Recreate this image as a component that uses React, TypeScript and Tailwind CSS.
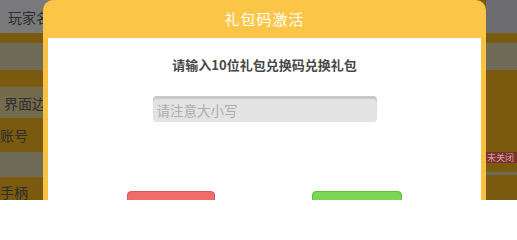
import React from "react";

const font = { fontFamily: '"Noto Sans CJK SC", "Noto Sans", sans-serif' };

const leftBands = [
  { h: "h-[33px]", bg: "bg-[#79797b]", text: "玩家名", cls: "pl-[8px] text-[14px] text-[#2e2e2e]" },
  { h: "h-[10px]", bg: "bg-[#7a5a0e]" },
  { h: "h-[27px]", bg: "bg-[#6f6b57]" },
  { h: "h-[17px]", bg: "bg-[#7a5a0e]" },
  { h: "h-[31px]", bg: "bg-[#746a4c]", text: "界面边距", cls: "pl-[4px] text-[14px] text-[#2e2e2e]" },
  { h: "h-[34px]", bg: "bg-[#7a5a0e]", text: "账号", cls: "pl-0 text-[14px] text-[#2e2e2e]" },
  { h: "h-[25px]", bg: "bg-[#6f6b57]" },
  { h: "h-[23px]", bg: "bg-[#7a5a0e]", text: "手柄", cls: "pl-0 pt-[6px] text-[14px] text-[#2e2e2e]" },
];

const rightBands = [
  { h: "h-[33px]", bg: "bg-[#6c6c70]" },
  { h: "h-[10px]", bg: "bg-[#7a5a0e]" },
  { h: "h-[27px]", bg: "bg-[#6f6b57]" },
  { h: "h-[82px]", bg: "bg-[#7a5a0e]" },
  { h: "h-[11px]", bg: "bg-[#7e3030]", text: "未关闭", cls: "pl-[1px] text-[9px] text-[#c9a9a0]" },
  { h: "h-[9px]", bg: "bg-[#7a5a0e]" },
  { h: "h-[3px]", bg: "bg-[#6f6b57]" },
  { h: "h-[25px]", bg: "bg-[#7a5a0e]" },
];

type Band = { h: string; bg: string; text?: string; cls?: string };

const Column: React.FC<{ bands: Band[]; className: string }> = ({ bands, className }) => (
  <div className={`flex flex-col ${className}`}>
    {bands.map((b, i) => (
      <div
        key={i}
        className={`${b.h} ${b.bg} flex items-center overflow-hidden whitespace-nowrap leading-none ${b.cls ?? ""}`}
      >
        {b.text}
      </div>
    ))}
  </div>
);

const App: React.FC = () => {
  return (
    <div className="relative w-[517px] h-[200px] overflow-hidden bg-[#7a5a0e]" style={font}>
      {/* background screen */}
      <div className="flex h-full">
        <Column bands={leftBands} className="w-[60px] shrink-0" />
        <div className="flex-1 bg-[#7a5a0e]" />
        <Column bands={rightBands} className="w-[31px] shrink-0" />
      </div>

      {/* gift code dialog */}
      <div className="absolute left-[43px] top-0 w-[443px] h-[230px] flex flex-col rounded-t-[10px] overflow-hidden">
        <div className="h-[38px] shrink-0 bg-[#fbc547] flex items-center justify-center text-white text-[15px] tracking-[1px] pt-[1px]">
          礼包码激活
        </div>
        <div className="flex-1 bg-white border-x-[5px] border-[#f7c242] flex flex-col items-center">
          <div className="mt-[19px] text-[13px] leading-[16px] font-bold text-[#474747]">
            请输入10位礼包兑换码兑换礼包
          </div>
          <div className="mt-[23px] w-[224px] h-[26px] rounded-[4px] bg-[#e3e3e3] shadow-[inset_0_3px_1px_#c8c8c8] flex items-center px-[4px] pt-[2px] text-[13.5px] text-[#adadad]">
            请注意大小写
          </div>
          <div className="mt-[69px] flex gap-[97px]">
            <div className="w-[88px] h-[32px] rounded-[4px] bg-[#f26a6a] border border-[#d95858]" />
            <div className="w-[90px] h-[32px] rounded-[4px] bg-[#79d753] border border-[#5ebf3c]" />
          </div>
        </div>
      </div>
    </div>
  );
};

export default App;
